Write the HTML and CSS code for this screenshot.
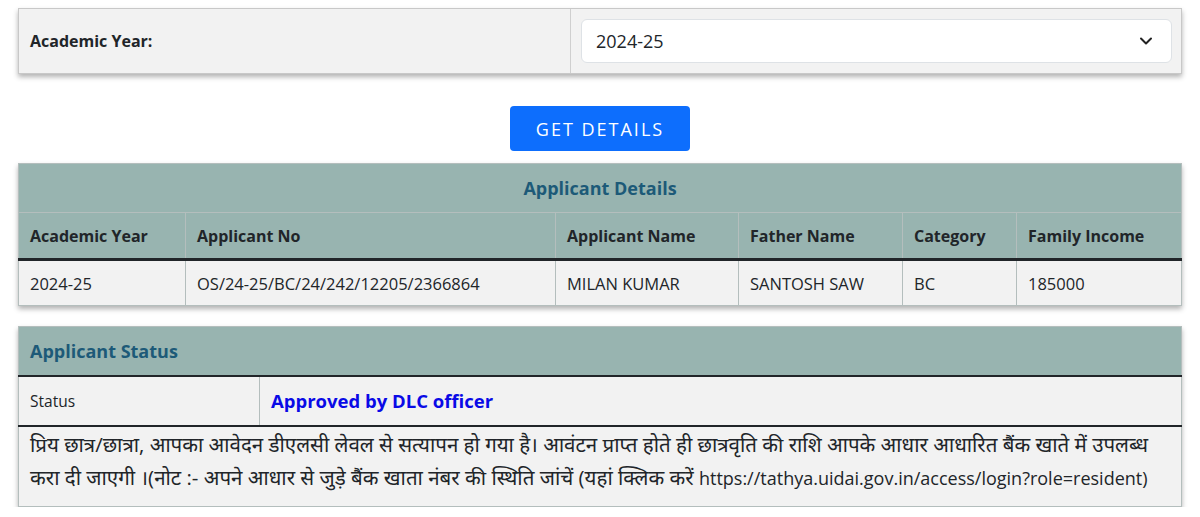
FILE: index.html
```html
<!DOCTYPE html>
<html lang="hi">
<head>
<meta charset="utf-8">
<link rel="stylesheet" href="styles.css">
</head>
<body>
<div class="page">
  <div class="year-card">
    <div class="year-label">Academic Year:</div>
    <div class="year-field">
      <div class="select">
        <span>2024-25</span>
        <svg class="chev" width="14" height="10" viewBox="0 0 14 10"><path d="M2 2.5 L7 7.5 L12 2.5" fill="none" stroke="#222" stroke-width="2" stroke-linecap="round" stroke-linejoin="round"/></svg>
      </div>
    </div>
  </div>

  <div class="btn-row"><button class="btn">GET DETAILS</button></div>

  <table class="grid details">
    <colgroup>
      <col style="width:167px"><col style="width:370px"><col style="width:183px"><col style="width:164px"><col style="width:114px"><col>
    </colgroup>
    <thead>
      <tr><th colspan="6" class="title center">Applicant Details</th></tr>
      <tr class="heads">
        <th>Academic Year</th><th>Applicant No</th><th>Applicant Name</th><th>Father Name</th><th>Category</th><th>Family Income</th>
      </tr>
    </thead>
    <tbody>
      <tr><td>2024-25</td><td>OS/24-25/BC/24/242/12205/2366864</td><td>MILAN KUMAR</td><td>SANTOSH SAW</td><td>BC</td><td>185000</td></tr>
    </tbody>
  </table>

  <table class="grid status">
    <colgroup><col style="width:241px"><col></colgroup>
    <thead>
      <tr><th colspan="2" class="title">Applicant Status</th></tr>
    </thead>
    <tbody>
      <tr class="status-row"><td class="small">Status</td><td class="approved">Approved by DLC officer</td></tr>
      <tr><td colspan="2" class="note">प्रिय छात्र/छात्रा, आपका आवेदन डीएलसी लेवल से सत्यापन हो गया है। आवंटन प्राप्त होते ही छात्रवृति की राशि आपके आधार आधारित बैंक खाते में उपलब्ध करा दी जाएगी ।(नोट :- अपने आधार से जुड़े बैंक खाता नंबर की स्थिति जांचें (यहां क्लिक करें <span class="url">https://tathya.uidai.gov.in/access/login?role=resident)</span></td></tr>
    </tbody>
  </table>
</div>
</body>
</html>
```

FILE: styles.css
```css
* { box-sizing: border-box; }
html, body { margin: 0; background: #fff; }
body {
  font-family: "Open Sans", "Noto Sans", "Noto Sans Devanagari", sans-serif;
  color: #212529;
}
.page { padding: 8px 18px 0; }

.year-card {
  display: grid;
  grid-template-columns: 552px 1fr;
  background: #f2f2f2;
  border: 1px solid #c8c8c8;
  box-shadow: 0 3px 5px rgba(0,0,0,0.3);
  height: 66px;
}
.year-label {
  display: flex;
  align-items: center;
  padding-left: 11px;
  font-weight: 700;
  font-size: 16px;
  border-right: 1px solid #cfcfcf;
}
.year-field { padding: 10px 9px 10px 10px; }
.select {
  height: 44px;
  background: #fff;
  border: 1px solid #dee2e6;
  border-radius: 6px;
  display: flex;
  align-items: center;
  justify-content: space-between;
  padding: 0 18px 0 14px;
  font-size: 18px;
}

.btn-row { display: flex; justify-content: center; padding: 32px 0 12px; }
.btn {
  width: 180px;
  height: 45px;
  background: #0d6efd;
  color: #fff;
  border: 0;
  border-radius: 4px;
  font-family: inherit;
  font-size: 18px;
  letter-spacing: 2px;
}

.grid {
  width: 100%;
  border-collapse: collapse;
  table-layout: fixed;
  background: #f2f2f2;
  box-shadow: 0 3px 5px rgba(0,0,0,0.3);
  font-size: 16.5px;
}
.grid th, .grid td {
  text-align: left;
  padding: 0 11px;
  border: 1px solid #b4bebd;
}
.grid thead th { background: #98b4b0; font-size: 16px; }
.grid .title {
  color: #1d5a78;
  font-weight: 700;
  font-size: 18px;
  height: 49px;
}
.grid .title.center { text-align: center; }
.grid .heads th {
  height: 47px;
  font-weight: 700;
  color: #212529;
  border-bottom: 3px solid #212529;
}
.details td { height: 46px; }

.status { margin-top: 20px; }
.status .title { border-bottom: 2px solid #212529; font-size: 18px; }
.status-row td { height: 50px; border-bottom: 2px solid #212529; }
.small { font-size: 15.5px; }
.approved { color: #0a0ae6; font-weight: 700; font-size: 18.5px; }
.note {
  font-size: 20.5px;
  line-height: 33px;
  padding: 1px 20px 11px 11px !important;
}
.url { font-size: 18px; }
```
